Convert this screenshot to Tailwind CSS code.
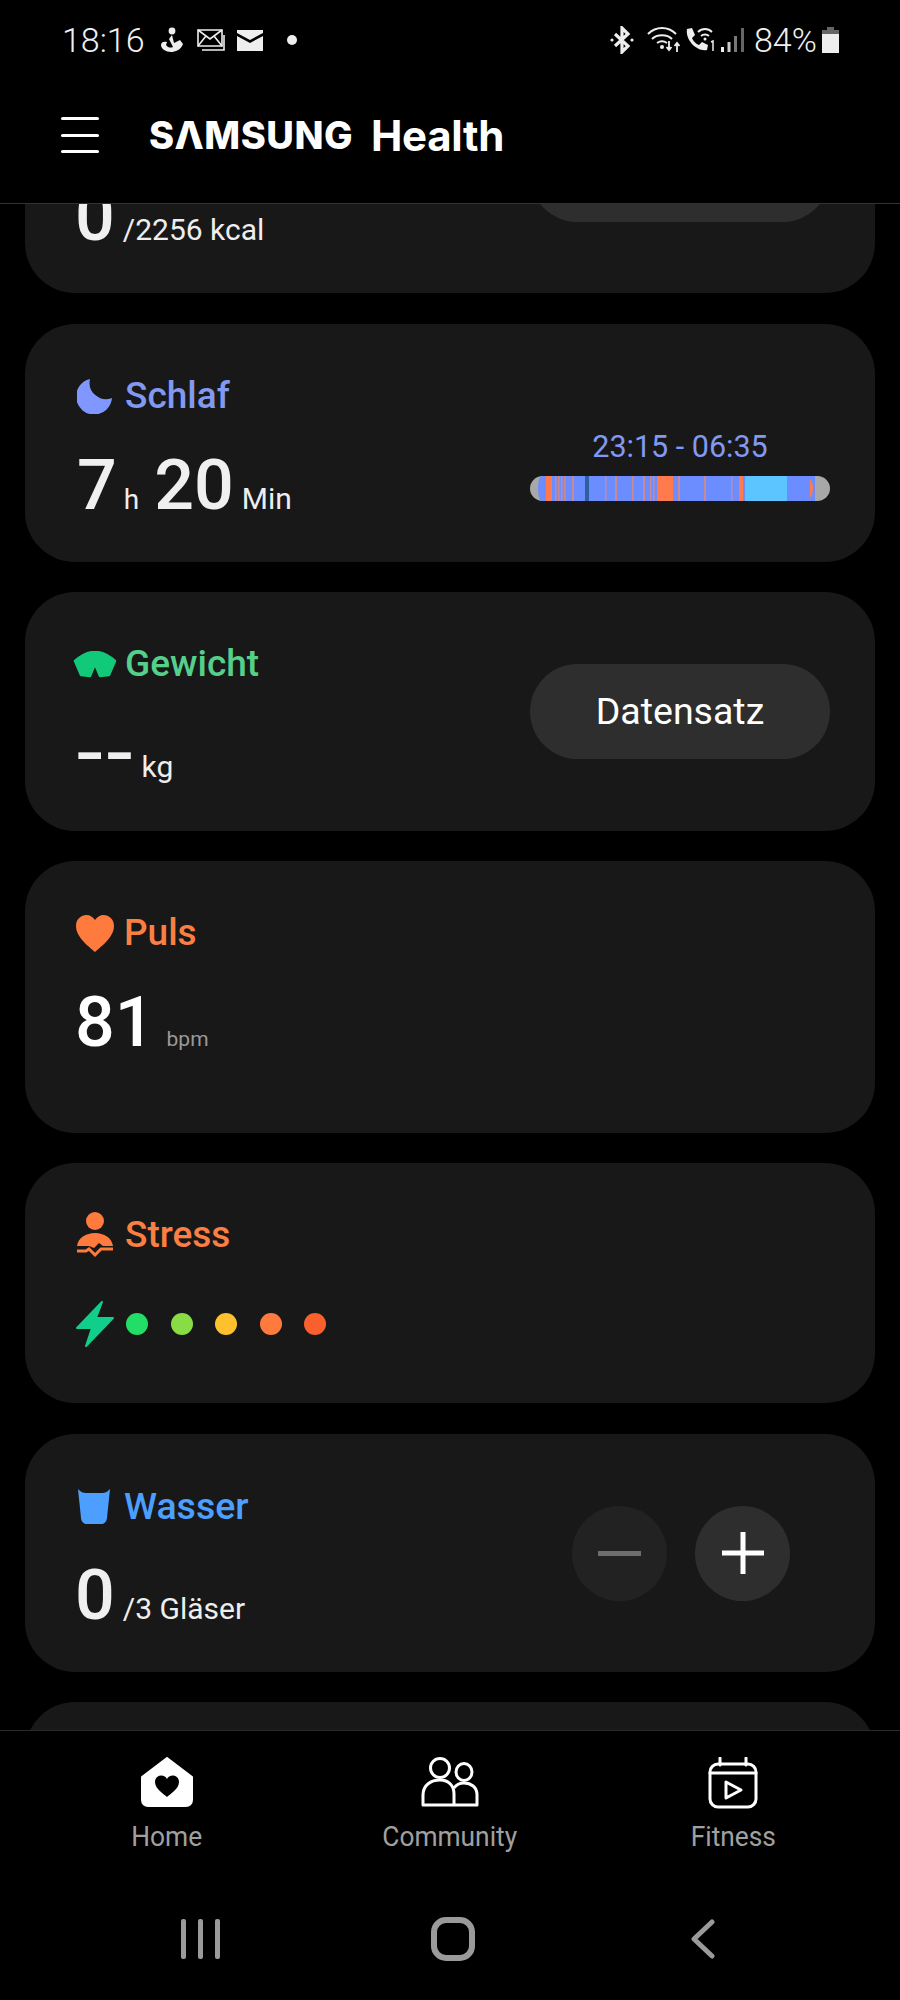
<!DOCTYPE html>
<html lang="de">
<head>
<meta charset="utf-8">
<script src="https://cdn.jsdelivr.net/npm/@tailwindcss/browser@4"></script>
</head>
<body class="bg-black">
<div class="w-[900px] h-[2000px] bg-black text-white font-['Roboto',sans-serif] flex flex-col overflow-hidden">

  <!-- status bar -->
  <div class="h-[80px] shrink-0 flex items-center justify-between pl-[62px] pr-[61px] text-[34px] font-light text-[#f0f0f0]">
    <div class="flex items-center">
      <span class="w-[98px]">18:16</span>
      <svg class="w-[24px] h-[26px]" viewBox="0 0 24 26" fill="#eee"><circle cx="12" cy="4" r="3.4"/><path d="M12 8 L14 16 L20 13 L23 17 C21 23 15 25 11 25 C6 25 1 22 1 18 C1 15 4 14 7 15 L6 18 C8 21 11 21 13 20 L9 12 Z"/></svg>
      <svg class="w-[28px] h-[23px] ml-[13px]" viewBox="0 0 28 23" fill="none" stroke="#eee" stroke-width="1.6"><path d="M1 1h24v16H1z" fill="#000"/><path d="M1 1l12 9 12-9M1 17l8-10M25 17l-8-10"/><path d="M27 6v15H5"/></svg>
      <svg class="w-[26px] h-[21px] ml-[12px]" viewBox="0 0 26 21"><path d="M0 0h26v3L13 10 0 3z" fill="#eee"/><path d="M0 6l13 7 13-7v15H0z" fill="#eee"/></svg>
      <span class="w-[10px] h-[10px] rounded-full bg-[#eee] ml-[24px]"></span>
    </div>
    <div class="flex items-center">
      <svg class="w-[24px] h-[28px]" viewBox="0 0 24 28" fill="none" stroke="#eee" stroke-width="3.2"><path d="M5 8l13 12-6 6V2l6 6L5 20"/><circle cx="2" cy="14" r="1.6" fill="#eee" stroke="none"/><circle cx="22" cy="14" r="1.6" fill="#eee" stroke="none"/></svg>
      <svg class="w-[34px] h-[26px] ml-[13px]" viewBox="0 0 34 26" fill="none" stroke="#eee" stroke-width="2"><path d="M1 7C9-1 21-1 29 7M5 12c5-5 15-5 20 0M10 16c3-2 7-2 10 0"/><circle cx="15" cy="20" r="2" fill="#eee" stroke="none"/><path d="M22 14v9M19.500 20l2.500 3 2.500-3M30 25v-9M27.500 19l2.500-3 2.500 3" stroke-width="1.800"/></svg>
      <svg class="w-[30px] h-[26px] ml-[4px]" viewBox="0 0 30 26"><path d="M2 2l5-1 3 7-3 3c1 3 4 6 7 7l3-3 6 3-1 5c-10 2-22-10-20-21z" fill="#eee"/><path d="M13 5c4-4 10-4 14 0M16 9c2-2 6-2 8 0" fill="none" stroke="#eee" stroke-width="1.800"/><circle cx="20" cy="12" r="1.500" fill="#eee"/><path d="M26 15l2-1v10" fill="none" stroke="#eee" stroke-width="1.500"/></svg>
      <svg class="w-[23px] h-[26px] ml-[6px]" viewBox="0 0 23 26"><rect x="0" y="20" width="3" height="5" fill="#eee"/><rect x="6.500" y="15" width="3" height="10" fill="#ccc"/><rect x="13" y="9" width="3" height="16" fill="#777"/><rect x="20" y="1" width="3" height="24" fill="#666"/></svg>
      <span class="ml-[10px] w-[64px]">84%</span>
      <svg class="w-[17px] h-[26px] ml-[4px]" viewBox="0 0 17 26"><path d="M5 0h7v3h5v23H0V3h5z" fill="#666"/><path d="M0 7h17v19H0z" fill="#eee"/></svg>
    </div>
  </div>

  <!-- app header -->
  <header class="h-[124px] shrink-0 flex items-start border-b border-[#333] pl-[61px]">
    <div class="flex flex-col gap-[13.500px] w-[38px] mt-[37px]">
      <span class="block h-[3px] rounded-full bg-white"></span>
      <span class="block h-[3px] rounded-full bg-white"></span>
      <span class="block h-[3px] rounded-full bg-white"></span>
    </div>
    <div class="flex items-center h-[52px] mt-[29px] ml-[50px] text-white">
      <span class="font-['Inter',sans-serif] font-extrabold text-[38px] tracking-[0.500px] w-[222px]">SΛMSUNG</span>
      <span class="font-['Inter',sans-serif] font-bold text-[42px] tracking-[-0.300px]">Health</span>
    </div>
  </header>

  <!-- cards -->
  <main class="h-[1526px] shrink-0 overflow-hidden">
    <div class="flex flex-col mx-[25px] gap-[30px] -mt-[149px]">

      <section class="h-[238px] rounded-[50px] bg-[#181818] flex items-start justify-between pl-[50px] pr-[45px]">
        <div class="pt-[125px] flex items-baseline leading-[72px]">
          <span class="text-[70px] font-medium text-[#f0f0f0]">0</span>
          <span class="text-[30px] ml-[8px] text-[#eee]">/2256 kcal</span>
        </div>
        <div class="self-center h-[95px] w-[300px] rounded-full bg-[#2e2e2e]"></div>
      </section>

      <section class="h-[238px] mt-[1px] rounded-[50px] bg-[#181818] flex items-start justify-between pl-[50px] pr-[45px]">
        <div class="pt-[48px]">
          <div class="h-[48px] flex items-center">
            <svg class="w-[36px] h-[36px] ml-[2px]" viewBox="0 0 36 36"><path d="M13 1A18 18 0 1 0 35 20A16.500 16.500 0 0 1 13 1Z" fill="#7f97ff"/></svg>
            <span class="ml-[12px] text-[37px] font-medium text-[#8299f2]">Schlaf</span>
          </div>
          <div class="mt-[29px] flex items-baseline leading-[72px]">
            <span class="text-[70px] font-medium text-[#f0f0f0] ml-[2px]">7</span>
            <span class="text-[28px] ml-[7px] text-[#eee]">h</span>
            <span class="text-[70px] font-medium text-[#f0f0f0] ml-[15px]">20</span>
            <span class="text-[30px] ml-[8px] text-[#eee]">Min</span>
          </div>
        </div>
        <div class="w-[300px] mt-[103px] flex flex-col items-center">
          <span class="h-[40px] leading-[40px] text-[30.500px] text-[#8299f2]">23:15 - 06:35</span>
          <svg class="mt-[9px] w-[300px] h-[25px]" viewBox="0 0 300 25">
            <rect width="300" height="25" rx="12.500" fill="#a8a8a8"/>
            <path d="M16 0h-5c-4 4-4 21 0 25h5z" fill="#6c8dff"/>
            <rect x="16" width="6" height="25" fill="#ff7b4d"/>
            <rect x="22" width="263" height="25" fill="#6c8dff"/>
            <g fill="#c98a96">
              <rect x="25" width="1.500" height="25"/><rect x="28" width="1.500" height="25"/><rect x="31" width="1.500" height="25"/><rect x="34" width="1.500" height="25"/><rect x="42" width="2" height="25"/>
              <rect x="75" width="1.500" height="25"/><rect x="85" width="2" height="25"/><rect x="102" width="1.500" height="25"/><rect x="113" width="2" height="25"/><rect x="120" width="1.500" height="25"/><rect x="123" width="1.500" height="25"/>
              <rect x="148" width="2" height="25"/><rect x="174" width="2" height="25"/><rect x="201" width="1.500" height="25"/>
            </g>
            <rect x="55" width="4" height="25" fill="#2f5f9e"/>
            <rect x="127" width="16" height="25" fill="#ff7b4d"/>
            <rect x="209" width="4" height="25" fill="#ff7b4d"/>
            <rect x="215" width="42" height="25" fill="#5cc4ff"/>
            <path d="M280 3c4 5 4 14 0 19z" fill="#ff7b4d"/>
          </svg>
        </div>
      </section>

      <section class="h-[239px] rounded-[50px] bg-[#181818] flex items-start justify-between pl-[50px] pr-[45px]">
        <div class="pt-[48px]">
          <div class="h-[48px] flex items-center">
            <svg class="w-[44px] h-[27px] -ml-[2px]" viewBox="0 0 44 27"><path d="M2 10Q22-8 42 10L36 24L27 25L22 13L17 25L8 24Z" fill="#12c97a" stroke="#12c97a" stroke-width="2.500" stroke-linejoin="round"/></svg>
            <span class="ml-[8px] text-[37px] font-medium text-[#55d08a]">Gewicht</span>
          </div>
          <div class="mt-[29px] flex items-baseline leading-[72px]">
            <span class="text-[70px] font-medium text-[#f0f0f0] scale-x-125 origin-left">--</span>
            <span class="text-[30px] ml-[19px] text-[#eee]">kg</span>
          </div>
        </div>
        <div class="self-center w-[300px] h-[95px] rounded-full bg-[#2e2e2e] flex items-center justify-center text-[37.500px] text-white">Datensatz</div>
      </section>

      <section class="h-[272px] rounded-[50px] bg-[#181818] pl-[50px] pt-[48px]">
        <div class="h-[48px] flex items-center">
          <svg class="w-[38px] h-[37px] ml-[1px]" viewBox="0 0 38 37"><path d="M19 37C15 33 0 23 0 11C0 4 5 0 10.500 0C14 0 17 2 19 5C21 2 24 0 27.500 0C33 0 38 4 38 11C38 23 23 33 19 37Z" fill="#ff7a3d"/></svg>
          <span class="ml-[10px] text-[37px] font-medium text-[#fb7f42]">Puls</span>
        </div>
        <div class="mt-[29px] flex items-baseline leading-[72px]">
          <span class="text-[70px] font-medium text-white">81</span>
          <span class="text-[21px] ml-[12px] text-[#9a9a9a]">bpm</span>
        </div>
      </section>

      <section class="h-[240px] rounded-[50px] bg-[#181818] pl-[50px] pt-[48px]">
        <div class="h-[48px] flex items-center">
          <svg class="w-[36px] h-[46px] ml-[2px]" viewBox="0 0 36 46"><circle cx="18" cy="9" r="9" fill="#ff7a3d"/><path d="M0 34C1 26 9 21 18 21C27 21 35 26 36 34H26L22 31L17 36L12 34Z" fill="#ff7a3d"/><path d="M0 39H9L12 37L18 43L24 37H36" fill="none" stroke="#ff7a3d" stroke-width="3"/></svg>
          <span class="ml-[12px] text-[37px] font-medium text-[#fb7f42]">Stress</span>
        </div>
        <div class="mt-[42px] flex items-center">
          <svg class="w-[40px] h-[46px]" viewBox="0 0 40 46"><path d="M27 1L21 17H38L11 45L17 27H2Z" fill="#10cf8a" stroke="#10cf8a" stroke-width="2" stroke-linejoin="round"/></svg>
          <span class="w-[22px] h-[22px] rounded-full bg-[#22dd66] ml-[11px]"></span>
          <span class="w-[22px] h-[22px] rounded-full bg-[#88dd44] ml-[22.500px]"></span>
          <span class="w-[22px] h-[22px] rounded-full bg-[#ffc02e] ml-[22.500px]"></span>
          <span class="w-[22px] h-[22px] rounded-full bg-[#ff7a3d] ml-[22.500px]"></span>
          <span class="w-[22px] h-[22px] rounded-full bg-[#f9602e] ml-[22.500px]"></span>
        </div>
      </section>

      <section class="h-[238px] mt-[1px] rounded-[50px] bg-[#181818] flex items-start justify-between pl-[50px] pr-[85px]">
        <div class="pt-[48px]">
          <div class="h-[48px] flex items-center">
            <svg class="w-[32px] h-[35px] ml-[3px]" viewBox="0 0 32 35"><path d="M0 0C3 3 5 4 8 4H24C27 4 29 3 32 0L29 29C28.500 33 26 35 23 35H9C6 35 3.500 33 3 29Z" fill="#4d9fff"/></svg>
            <span class="ml-[14px] text-[37.500px] font-medium text-[#4d9fff]">Wasser</span>
          </div>
          <div class="mt-[29px] flex items-baseline leading-[72px]">
            <span class="text-[70px] font-medium text-[#f0f0f0]">0</span>
            <span class="text-[30px] ml-[8px] text-[#eee]">/3 Gläser</span>
          </div>
        </div>
        <div class="self-center flex gap-[28px]">
          <div class="w-[95px] h-[95px] rounded-full bg-[#222] flex items-center justify-center">
            <span class="block w-[43px] h-[5px] bg-[#6e6e6e]"></span>
          </div>
          <div class="w-[95px] h-[95px] rounded-full bg-[#2e2e2e] flex items-center justify-center">
            <svg class="w-[42px] h-[42px]" viewBox="0 0 42 42" fill="#fff"><rect y="18.500" width="42" height="5"/><rect x="18.500" width="5" height="42"/></svg>
          </div>
        </div>
      </section>

      <section class="h-[238px] rounded-[50px] bg-[#181818]"></section>
    </div>
  </main>

  <!-- bottom nav -->
  <nav class="h-[270px] shrink-0 border-t border-[#2a2a2a] bg-black">
    <div class="grid grid-cols-3 mx-[25px] pt-[26px]">
      <div class="flex flex-col items-center">
        <svg class="w-[52px] h-[50px]" viewBox="0 0 52 50"><path d="M26 1L51 20V43C51 47 48 49 45 49H7C4 49 1 47 1 43V20Z" fill="#fff" stroke="#fff" stroke-width="2" stroke-linejoin="round"/><path d="M26 40C23 37 14 32 14 25C14 21 17 18.500 20 18.500C23 18.500 25 20 26 22C27 20 29 18.500 32 18.500C35 18.500 38 21 38 25C38 32 29 37 26 40Z" fill="#000"/></svg>
        <span class="mt-[10px] text-[28px] leading-[40px] text-[#a0a0a0] scale-x-[0.94]">Home</span>
      </div>
      <div class="flex flex-col items-center">
        <svg class="w-[58px] h-[50px]" viewBox="0 0 58 50" fill="none" stroke="#fff" stroke-width="3"><ellipse cx="19" cy="11" rx="9.500" ry="9.500"/><ellipse cx="43" cy="15" rx="8" ry="8.500"/><path d="M2 48V38C2 28 10 23 19 23C28 23 33 29 33 37V48ZM2 48H56V38C56 30 50 26 43 26C38 26 35 28 33 31" stroke-linejoin="round"/></svg>
        <span class="mt-[10px] text-[28px] leading-[40px] text-[#a0a0a0] scale-x-[0.94]">Community</span>
      </div>
      <div class="flex flex-col items-center">
        <svg class="w-[50px] h-[52px]" viewBox="0 0 50 52" fill="none" stroke="#fff" stroke-width="3"><rect x="2" y="7" width="46" height="43" rx="8"/><path d="M2 16H48M12 1V8M38 1V8" stroke-linecap="round"/><path d="M18 25V41L33 33Z" stroke-linejoin="round"/></svg>
        <span class="mt-[8px] text-[28px] leading-[40px] text-[#a0a0a0] scale-x-[0.94]">Fitness</span>
      </div>
    </div>
    <div class="flex items-center mt-[60px] ml-[181px]">
      <svg class="w-[39px] h-[40px]" viewBox="0 0 39 40" fill="#9a9a9a"><rect width="5" height="40" rx="2"/><rect x="17" width="5" height="40" rx="2"/><rect x="34" width="5" height="40" rx="2"/></svg>
      <svg class="w-[44px] h-[44px] ml-[211px]" viewBox="0 0 44 44" fill="none" stroke="#9a9a9a" stroke-width="6"><rect x="3" y="3" width="38" height="38" rx="12"/></svg>
      <svg class="w-[24px] h-[40px] ml-[216px]" viewBox="0 0 24 40" fill="none" stroke="#9a9a9a" stroke-width="5" stroke-linecap="round" stroke-linejoin="round"><path d="M21 3L3 20L21 37"/></svg>
    </div>
  </nav>
</div>
</body>
</html>
